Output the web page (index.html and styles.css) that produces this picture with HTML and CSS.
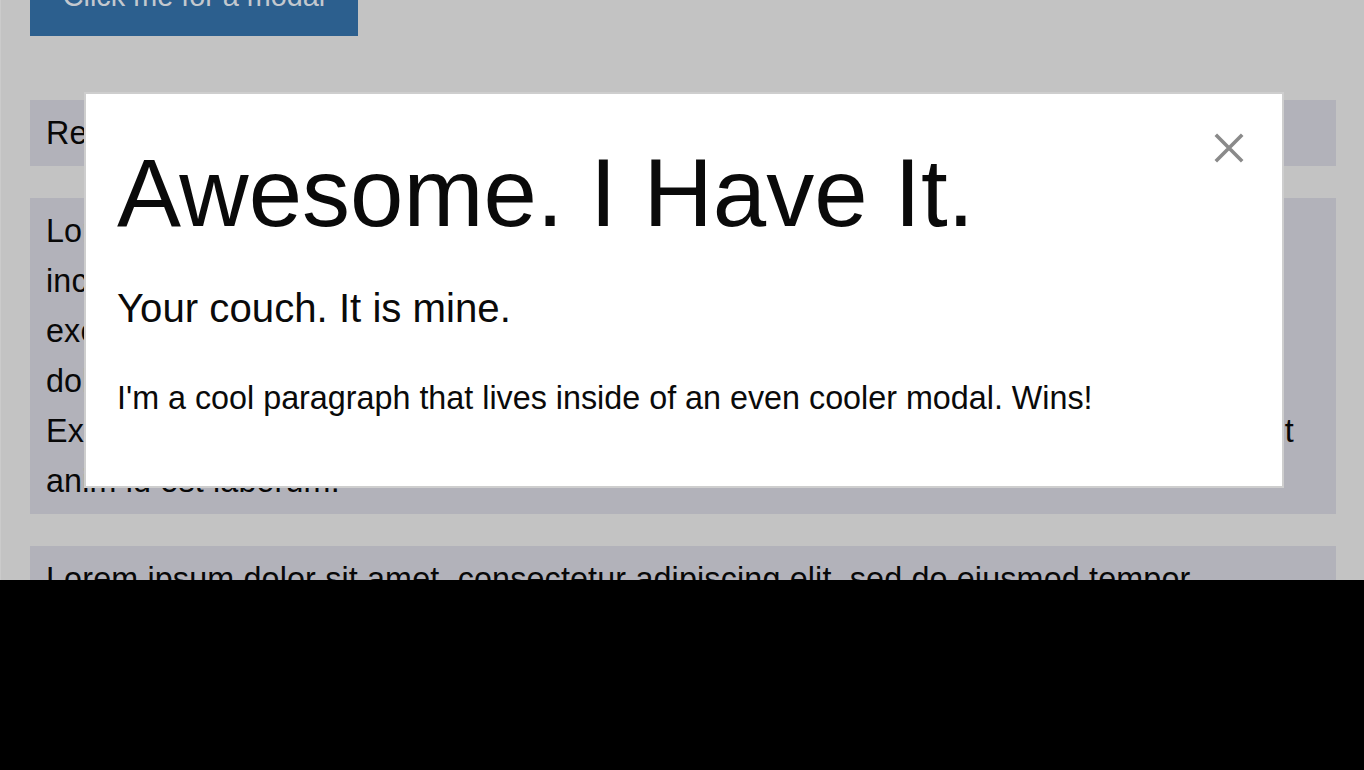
FILE: index.html
```html
<!DOCTYPE html>
<html lang="en">
<head>
<meta charset="utf-8">
<title>Modal demo</title>
<link rel="stylesheet" href="styles.css">
</head>
<body>
<div class="screen">
  <div class="viewport">
    <div class="page">
      <button class="btn">Click me for a modal</button>
      <div class="panel">Reveal is open</div>
      <div class="panel">Lorem ipsum dolor sit amet, consectetur adipiscing elit, sed do eiusmod tempor incididunt ut labore et dolore magna aliqua. Ut enim ad minim veniam, quis nostrud exercitation ullamco laboris nisi ut aliquip ex ea commodo consequat. Duis aute irure dolor in reprehenderit in voluptate velit esse cillum dolore eu fugiat nulla pariatur. Excepteur sint occaecat cupidatat non proident, sunt in culpa qui officia deserunt mollit anim id est laborum.</div>
      <div class="panel">Lorem ipsum dolor sit amet, consectetur adipiscing elit, sed do eiusmod tempor incididunt ut labore et dolore magna aliqua. Ut enim ad minim veniam, quis nostrud exercitation ullamco laboris nisi ut aliquip ex ea commodo consequat.</div>
    </div>
    <div class="modal">
      <h1 class="modal-title">Awesome. I Have It.</h1>
      <h2 class="modal-lead">Your couch. It is mine.</h2>
      <p class="modal-text">I'm a cool paragraph that lives inside of an even cooler modal. Wins!</p>
      <button class="close" aria-label="Close">
        <svg width="30" height="30" viewBox="0 0 30 30"><path d="M1.8 1.8 L28.2 28.2 M28.2 1.8 L1.8 28.2" stroke="#8a8a8a" stroke-width="3.6" fill="none"/></svg>
      </button>
    </div>
  </div>
  <div class="blackout"></div>
</div>
</body>
</html>
```
FILE: styles.css
```css
html, body {
  margin: 0;
  padding: 0;
  background: #000;
}
body {
  font-family: "Liberation Sans", Arial, Helvetica, sans-serif;
  color: #0a0a0a;
}
.screen {
  width: 1364px;
  height: 770px;
  display: flex;
  flex-direction: column;
  overflow: hidden;
}
.viewport {
  position: relative;
  height: 580px;
  flex: none;
  background: #c3c3c3;
  border-left: 1px solid #cbcbcb;
  overflow: hidden;
}
.blackout {
  flex: 1;
  background: #000;
}
.page {
  margin-top: -43px;
  padding: 0 28px 0 29px;
  display: flex;
  flex-direction: column;
  align-items: flex-start;
}
.btn {
  font-family: inherit;
  font-size: 28.8px;
  line-height: 1;
  padding: 25px 32px;
  border: 0;
  background: #2c5f8e;
  color: #c3c8ce;
  margin: 0 0 64px;
  width: 328px;
}
.panel {
  align-self: stretch;
  background: #b2b2ba;
  font-size: 32.3px;
  letter-spacing: 0.15px;
  line-height: 50px;
  padding: 8px 36px 8px 16px;
  margin-bottom: 32px;
  color: #080808;
}
.modal {
  position: absolute;
  left: 83px;
  top: 92px;
  width: 1200px;
  height: 396px;
  box-sizing: border-box;
  background: #fff;
  border: 2px solid #cecece;
  padding: 34px 31px 32px;
}
.modal-title {
  font-size: 96px;
  font-weight: normal;
  line-height: 1.36;
  margin: 0 0 22px;
}
.modal-lead {
  font-size: 40.2px;
  font-weight: normal;
  line-height: 1.4;
  margin: 0 0 36px;
}
.modal-text {
  font-size: 32.3px;
  line-height: 50px;
  margin: 0;
}
.close {
  position: absolute;
  top: 39px;
  right: 38px;
  width: 30px;
  height: 30px;
  padding: 0;
  border: 0;
  background: none;
  display: block;
}
.close svg {
  display: block;
}
```
